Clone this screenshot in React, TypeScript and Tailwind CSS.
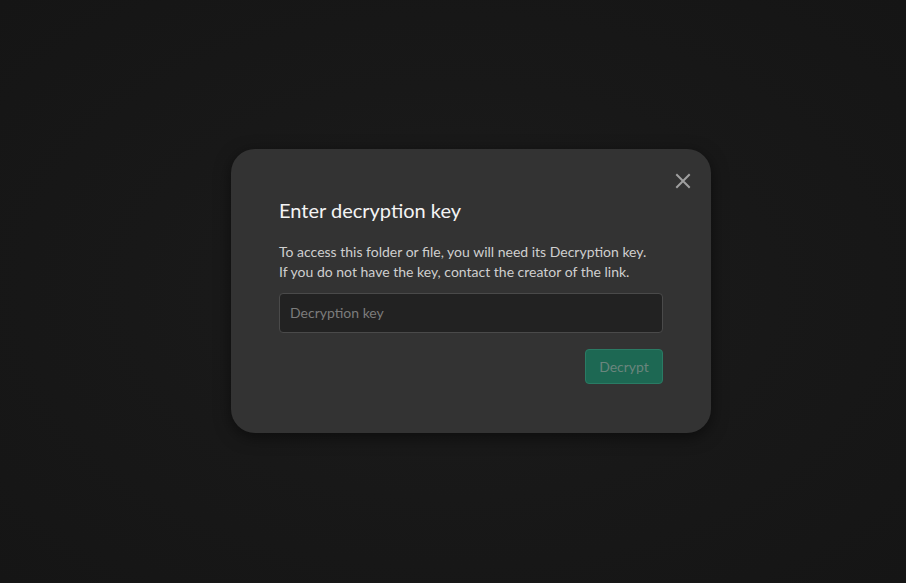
import React from "react";

export default function App() {
  return (
    <div
      className="w-[906px] h-[583px] flex items-center justify-center pl-[36px] pb-[2px]"
      style={{ fontFamily: "Lato, 'Noto Sans', sans-serif", background: "radial-gradient(ellipse at center, #1c1c1c 0%, #181818 50%, #151515 100%)" }}
    >
      <div className="relative w-[480px] h-[284px] bg-[#333333] rounded-[24px] shadow-[0_4px_16px_rgba(0,0,0,0.5)] pl-[48px] pr-[48px] pt-[48px] flex flex-col">
        <button className="absolute right-[19px] top-[23px] w-[18px] h-[18px] flex items-center justify-center text-[#a0a0a0]">
          <svg width="16" height="16" viewBox="0 0 16 16" fill="none" stroke="currentColor" strokeWidth="2" strokeLinecap="square">
            <path d="M2 2L14 14M14 2L2 14" />
          </svg>
        </button>
        <h2 className="text-[20px] leading-[26px] text-[#f4f4f4] m-0 font-normal">Enter decryption key</h2>
        <p className="mt-[19px] text-[14px] leading-[20px] text-[#cfcfcf]">
          To access this folder or file, you will need its Decryption key.
          <br />
          If you do not have the key, contact the creator of the link.
        </p>
        <input
          className="mt-[11px] w-[384px] h-[40px] bg-[#222222] border border-[#4a4a4a] rounded-[4px] px-[10px] text-[14px] text-[#ddd] placeholder:text-[#7c7c7c] outline-none"
          placeholder="Decryption key"
          style={{ fontFamily: "Lato, sans-serif" }}
        />
        <div className="w-[384px] flex justify-end mt-[16px]">
          <button
            className="w-[78px] h-[35px] rounded-[4px] bg-[#1d6853] border border-[#2a7b64] text-[14px] text-[#6a857d]"
            style={{ fontFamily: "Lato, sans-serif" }}
          >
            Decrypt
          </button>
        </div>
      </div>
    </div>
  );
}
